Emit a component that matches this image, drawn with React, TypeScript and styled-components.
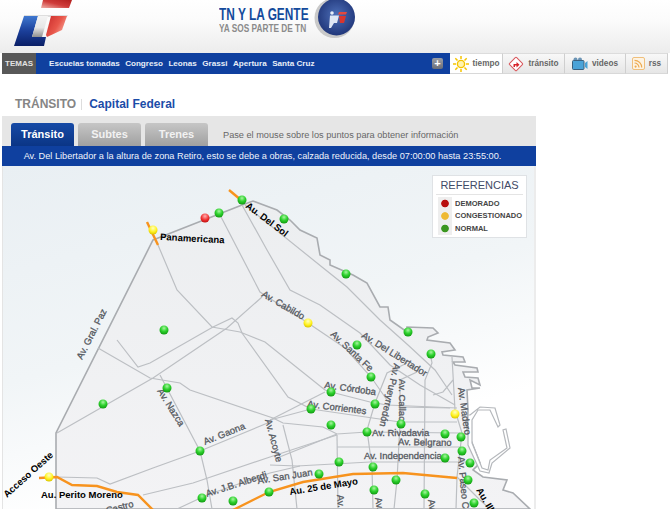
import styled, { createGlobalStyle } from "styled-components";

const GlobalStyle = createGlobalStyle`
  html, body {
    margin: 0;
    padding: 0;
    background: #fff;
    overflow: hidden;
    height: 509px;
    font-family: "Liberation Sans", Arial, sans-serif;
  }
`;

const Page = styled.div`
  width: 670px;
  height: 509px;
  overflow: hidden;
`;

const Header = styled.header`
  display: flex;
  height: 53px;
  background: linear-gradient(#fff 0%, #fbfbfb 40%, #ececec 100%);
`;

const LogoSvg = styled.svg`
  width: 90px;
  height: 53px;
  flex: none;
`;

const Promo = styled.div`
  display: flex;
  margin-left: 129px;
  height: 40px;
`;

const PromoText = styled.div`
  display: flex;
  flex-direction: column;
  padding-top: 6px;
  width: 95px;
`;

const PromoTitle = styled.span`
  font-size: 16.5px;
  line-height: 16px;
  font-weight: 700;
  color: #144a9c;
  white-space: nowrap;
  transform: scaleX(0.72);
  transform-origin: left center;
`;

const PromoSub = styled.span`
  font-size: 11.5px;
  line-height: 12px;
  font-weight: 700;
  color: #8b8b8b;
  white-space: nowrap;
  transform: scaleX(0.72);
  transform-origin: left center;
`;

const Ball = styled.svg`
  width: 46px;
  height: 40px;
`;

const Nav = styled.nav`
  display: flex;
  height: 21px;
  margin: 0 2px;
`;

const Temas = styled.div`
  width: 34px;
  background: #585858;
  color: #e2e2e2;
  font-size: 8px;
  font-weight: 700;
  line-height: 21px;
  text-align: center;
`;

const Topics = styled.div`
  display: flex;
  align-items: center;
  gap: 5.5px;
  width: 414px;
  box-sizing: border-box;
  padding: 0 7px 0 13px;
  background: #0f409f;
`;

const Topic = styled.a`
  color: #e8eef8;
  font-size: 8.1px;
  font-weight: 700;
  white-space: nowrap;
`;

const Plus = styled.span`
  width: 11px;
  height: 11px;
  margin-left: auto;
  border-radius: 2px;
  background: linear-gradient(#9a9ea6, #6a6e78);
  color: #fff;
  font-size: 11px;
  font-weight: 700;
  line-height: 11px;
  text-align: center;
`;

const SideTabs = styled.div`
  display: flex;
  flex: 1;
`;

const SideTab = styled.a<{ $active?: boolean; $w: number }>`
  display: flex;
  align-items: center;
  justify-content: center;
  gap: 4px;
  width: ${(p) => p.$w}px;
  box-sizing: border-box;
  background: ${(p) => (p.$active ? "#fff" : "linear-gradient(#f8f8f8, #e6e6e6)")};
  border-right: 1px solid #cfcfcf;
  border-top: 1px solid #dcdcdc;
  border-bottom: 1px solid #d8d8d8;
  color: #666;
  font-size: 8.2px;
  font-weight: 700;
`;

const Title = styled.h1`
  display: flex;
  align-items: center;
  height: 42px;
  box-sizing: border-box;
  margin: 0;
  padding: 18px 0 0 15px;
  font-size: 12px;
  font-weight: 700;
`;

const TitleGray = styled.span`
  color: #858585;
`;

const TitleSep = styled.span`
  width: 1px;
  height: 11px;
  margin: 0 7px 0 5px;
  background: #ddd;
`;

const TitleBlue = styled.span`
  color: #1b4ca8;
`;

const Panel = styled.section`
  width: 534px;
  margin-left: 2px;
  background: #e6e6e6;
`;

const TabRow = styled.div`
  display: flex;
  align-items: flex-end;
  gap: 4px;
  height: 30px;
  padding-left: 9px;
`;

const Tab = styled.a<{ $active?: boolean }>`
  width: 63px;
  height: 23px;
  border-radius: 3px 3px 0 0;
  background: ${(p) =>
    p.$active ? "linear-gradient(#164aa6, #0b3585)" : "linear-gradient(#c6c6c6, #a0a0a0)"};
  color: ${(p) => (p.$active ? "#fff" : "#f2f2f2")};
  font-size: 11px;
  font-weight: 700;
  line-height: 22px;
  text-align: center;
`;

const Hint = styled.span`
  margin-left: 11px;
  color: #666;
  font-size: 9.2px;
  line-height: 22px;
`;

const Band = styled.div`
  height: 20px;
  padding-right: 13px;
  background: #0f409f;
  color: #f0f4fb;
  font-size: 9.2px;
  line-height: 20px;
  text-align: center;
  white-space: nowrap;
`;

const MapArea = styled.div`
  position: relative;
  height: 343px;
  background: linear-gradient(165deg, #e9eff3 0%, #f1f5f7 45%, #fff 75%);
  border-left: 1px solid #e4e4e4;
  border-right: 2px solid #ececec;
`;

const MapSvg = styled.svg`
  display: block;
  width: 531px;
  height: 343px;
`;

const Legend = styled.aside`
  position: absolute;
  top: 9px;
  right: 7px;
  width: 95px;
  height: 63px;
  box-sizing: border-box;
  padding: 0 3px;
  background: #fff;
  border: 1px solid #dfe2e5;
`;

const LegendTitle = styled.div`
  height: 18px;
  border-bottom: 1px solid #e4e4e4;
  margin-bottom: 2px;
  color: #3f4a66;
  font-size: 11px;
  line-height: 19px;
  text-align: center;
`;

const LegendRow = styled.div`
  display: flex;
  align-items: center;
  gap: 3px;
  height: 12.6px;
  padding-left: 2px;
  color: #444;
  font-size: 7.5px;
  font-weight: 700;
  white-space: nowrap;
`;

const LegendDot = styled.span<{ $color: string }>`
  width: 14px;
  height: 12.6px;
  background: radial-gradient(circle, ${(p) => p.$color} 3.4px, #eee 4.2px);
`;

const RoadLine = styled.polyline`
  fill: none;
  stroke: #bcbfc3;
  stroke-width: 1.2;
`;

const Highway = styled.polyline`
  fill: none;
  stroke: #f7931e;
  stroke-width: 2.4;
`;

const Label = styled.text<{ $black?: boolean }>`
  font-family: "Liberation Sans", Arial, sans-serif;
  font-size: 9.5px;
  font-weight: ${(p) => (p.$black ? 700 : 400)};
  fill: ${(p) => (p.$black ? "#000" : "#55595f")};
  stroke: ${(p) => (p.$black ? "none" : "#55595f")};
  stroke-width: 0.3;
`;

const topics = ["Escuelas tomadas", "Congreso", "Leonas", "Grassi", "Apertura", "Santa Cruz"];

const roads = [
  "158,245 177,290 212,327 240,332 265,342 325,390",
  "219,213 260,292 308,323 345,348 371,377 387,400",
  "262,297 227,328 153,378 57,433",
  "117,340 138,367 150,363 213,327 232,318 238,323 242,333 288,397 311,409",
  "242,205 267,250 290,290 320,305 360,333 390,365 420,385 455,405",
  "245,205 322,267 347,287 380,320 408,345 435,370 452,395",
  "160,375 200,451 207,480 212,509",
  "57,477 97,478 110,484 153,468 200,451 270,422",
  "98,348 150,378 180,383 190,390 273,418 283,423 323,427 337,434 367,432 460,433",
  "283,425 292,460 297,509",
  "270,420 311,409 400,422 457,422",
  "270,420 325,392",
  "325,390 331,392 370,402 387,405 457,408",
  "337,434 277,458",
  "337,435 338,509",
  "337,447 460,447",
  "270,465 297,466 370,462 470,462",
  "143,495 193,483 270,457 337,435",
  "177,509 207,495 270,473 300,466",
  "407,363 387,373 375,403 367,430 372,467 373,509",
  "417,372 400,380 400,423 397,480 394,509",
  "430,353 432,363 425,380 424,509",
  "452,357 455,410 458,420 462,433 457,477 456,509",
  "433,395 443,392 453,380",
  "400,407 450,408",
  "457,477 480,500 490,509",
];

const coast =
  "153,240 242,205 253,201 277,210 290,220 300,230 317,238 320,255 330,260 330,265 353,275 367,283 380,307 388,307 390,320 407,332 407,327 433,328 438,333 428,337 427,340 450,343 455,350 442,352 443,355 463,357 465,362 453,362 455,365 477,368 478,372 463,372 465,377 478,378 480,385 470,380 472,388 480,388 467,390 468,410 467,430 480,463 473,470 483,477 507,480 503,490 513,493 530,509 56,509 56,433";

const basin =
  "470,415 480,407 495,408 500,425 498,427 490,410 478,410 472,420 472,443 482,468 488,470 490,460 507,448 503,430 506,429 510,448 492,463 489,473 480,471 468,445 468,415";

const greens = [
  [219, 213], [242, 200], [284, 219], [346, 274], [164, 330], [408, 332], [103, 404], [167, 388],
  [200, 451], [202, 498], [233, 501], [269, 492], [357, 345], [431, 354], [371, 377], [331, 392],
  [375, 404], [311, 409], [401, 424], [331, 425], [367, 432], [445, 434], [461, 437], [462, 451],
  [445, 458], [470, 463], [339, 462], [373, 467], [319, 474], [396, 480], [468, 480], [374, 490],
  [425, 494], [474, 503],
];

const yellows = [[153, 230], [308, 323], [49, 477], [455, 414]];

const labels: { t: string; x: number; y: number; r: number; black?: boolean }[] = [
  { t: "Panamericana", x: 160, y: 240, r: 3, black: true },
  { t: "Au. Del Sol", x: 245, y: 207, r: 37, black: true },
  { t: "Av. Gral. Paz", x: 82, y: 360, r: -63 },
  { t: "Av. Cabildo", x: 261, y: 296, r: 30 },
  { t: "Av. Santa Fe", x: 330, y: 335, r: 43 },
  { t: "Av. Del Libertador", x: 361, y: 337, r: 32 },
  { t: "Av. Córdoba", x: 324, y: 388, r: 8 },
  { t: "Av. Corrientes", x: 307, y: 407, r: 7 },
  { t: "Av. Pueyrredón", x: 394, y: 363, r: 103 },
  { t: "Av. Callao", x: 399, y: 379, r: 90 },
  { t: "Av. Madero", x: 458, y: 388, r: 82 },
  { t: "Av. Rivadavia", x: 372, y: 436, r: 0 },
  { t: "Av. Belgrano", x: 398, y: 445, r: 1 },
  { t: "Av. Independencia", x: 364, y: 459, r: 0 },
  { t: "Av. Paseo Colón", x: 458, y: 457, r: 85 },
  { t: "Au. Illia", x: 476, y: 490, r: 60, black: true },
  { t: "Av. Gaona", x: 205, y: 445, r: -22 },
  { t: "Av. Nazca", x: 157, y: 391, r: 58 },
  { t: "Av. Acoyte", x: 265, y: 420, r: 75 },
  { t: "Av. J.B. Alberdi", x: 207, y: 497, r: -18 },
  { t: "Av. San Juan", x: 258, y: 484, r: -9 },
  { t: "Au. 25 de Mayo", x: 290, y: 495, r: -9, black: true },
  { t: "Au. Perito Moreno", x: 41, y: 498, r: 0, black: true },
  { t: "Acceso Oeste", x: 7, y: 498, r: -42, black: true },
  { t: "Av. Castro", x: 92, y: 518, r: -15 },
  { t: "Av.", x: 337, y: 495, r: 85 },
  { t: "Av.", x: 375, y: 498, r: 80 },
  { t: "Av.", x: 428, y: 500, r: 80 },
];

function Sun() {
  return (
    <svg width="16" height="16" viewBox="0 0 16 16">
      <circle cx="8" cy="8" r="3.6" fill="#fff3b0" stroke="#f5c400" strokeWidth="1.4" />
      <path
        d="M8 0v3M8 13v3M0 8h3M13 8h3M2.3 2.3l2.2 2.2M11.5 11.5l2.2 2.2M2.3 13.7l2.2-2.2M11.5 4.5l2.2-2.2"
        stroke="#f5c400"
        strokeWidth="1.5"
      />
    </svg>
  );
}

function Turn() {
  return (
    <svg width="16" height="16" viewBox="0 0 16 16">
      <rect x="3" y="3" width="10" height="10" rx="1" transform="rotate(45 8 8)" fill="#fff" stroke="#d9555a" />
      <path d="M5.5 11V8h3V6l3 2.8-3 2.7V9.6H7V11z" fill="#d8232a" />
    </svg>
  );
}

function Camera() {
  return (
    <svg width="16" height="14" viewBox="0 0 16 14">
      <circle cx="3.5" cy="2.5" r="2" fill="#6b94b5" />
      <circle cx="8" cy="2.5" r="2" fill="#6b94b5" />
      <rect x="0.5" y="3.5" width="11.5" height="9" rx="1" fill="#4aa3d8" stroke="#39607f" />
      <path d="M13 6l2.5-2v8L13 10z" fill="#4aa3d8" />
    </svg>
  );
}

function Rss() {
  return (
    <svg width="13" height="13" viewBox="0 0 13 13">
      <rect x="0.5" y="0.5" width="12" height="12" rx="1.5" fill="#fdf3e3" stroke="#efbf7c" />
      <circle cx="3.6" cy="9.6" r="1.1" fill="#eda94f" />
      <path d="M2.5 6a4.5 4.5 0 0 1 4.5 4.5M2.5 3.3a7.2 7.2 0 0 1 7.2 7.2" fill="none" stroke="#eda94f" strokeWidth="1.2" />
    </svg>
  );
}

export default function App() {
  return (
    <Page>
      <GlobalStyle />
      <Header>
        <LogoSvg viewBox="0 0 90 53">
          <defs>
            <linearGradient id="lb" x1="0" y1="0" x2="0" y2="1">
              <stop offset="0" stopColor="#3f78d0" />
              <stop offset="0.5" stopColor="#1b3f9a" />
              <stop offset="1" stopColor="#0a1f66" />
            </linearGradient>
            <linearGradient id="lr" x1="0" y1="0" x2="1" y2="0.6">
              <stop offset="0" stopColor="#c92a2a" />
              <stop offset="0.6" stopColor="#e8564a" />
              <stop offset="1" stopColor="#f7a79a" />
            </linearGradient>
            <linearGradient id="lt" x1="0" y1="1" x2="1" y2="0">
              <stop offset="0" stopColor="#f0b0a8" />
              <stop offset="0.5" stopColor="#cf3c3a" />
              <stop offset="1" stopColor="#b3201f" />
            </linearGradient>
            <linearGradient id="lw" x1="0" y1="0" x2="0" y2="1">
              <stop offset="0" stopColor="#f4f4f4" />
              <stop offset="0.55" stopColor="#e6e6e6" />
              <stop offset="1" stopColor="#8f8f8f" />
            </linearGradient>
          </defs>
          <polygon points="43,0 72,0 69,8 41,8" fill="url(#lt)" />
          <polygon points="24,15 68,15 67,17 24,17" fill="#dedede" />
          <polygon points="24,16 38,16 32,37 46,37 44,46 14,46" fill="url(#lb)" />
          <polygon points="38,16 48,16 42,37 32,37" fill="url(#lw)" />
          <polygon points="51,16 67,16 62,30 47,37 46,35" fill="url(#lr)" />
        </LogoSvg>
        <Promo>
          <PromoText>
            <PromoTitle>TN Y LA GENTE</PromoTitle>
            <PromoSub>YA SOS PARTE DE TN</PromoSub>
          </PromoText>
          <Ball viewBox="0 0 46 40">
            <defs>
              <radialGradient id="ball" cx="0.5" cy="0.45" r="0.6">
                <stop offset="0" stopColor="#4d6fb8" />
                <stop offset="1" stopColor="#1d3275" />
              </radialGradient>
            </defs>
            <circle cx="20.5" cy="18" r="20" fill="#c9c9c9" />
            <circle cx="22.5" cy="17" r="18.5" fill="url(#ball)" />
            <circle cx="18" cy="13" r="1.8" fill="#e8eef8" />
            <polygon points="16,15.5 25,15.5 23,23 20,23 17,28 15,28" fill="#dfe7f5" />
            <polygon points="25,12 33,12 32,14.5 24,14.5" fill="#e2493f" />
            <polygon points="25,16 32,16 30,23 26,23" fill="#d8362f" />
          </Ball>
        </Promo>
      </Header>
      <Nav>
        <Temas>TEMAS</Temas>
        <Topics>
          {topics.map((t) => (
            <Topic key={t}>{t}</Topic>
          ))}
          <Plus>+</Plus>
        </Topics>
        <SideTabs>
          <SideTab $active $w={53}>
            <Sun />
            tiempo
          </SideTab>
          <SideTab $w={62}>
            <Turn />
            tránsito
          </SideTab>
          <SideTab $w={61}>
            <Camera />
            videos
          </SideTab>
          <SideTab $w={42}>
            <Rss />
            rss
          </SideTab>
        </SideTabs>
      </Nav>
      <Title>
        <TitleGray>TRÁNSITO</TitleGray>
        <TitleSep />
        <TitleBlue>Capital Federal</TitleBlue>
      </Title>
      <Panel>
        <TabRow>
          <Tab $active>Tránsito</Tab>
          <Tab>Subtes</Tab>
          <Tab>Trenes</Tab>
          <Hint>Pase el mouse sobre los puntos para obtener información</Hint>
        </TabRow>
        <Band>Av. Del Libertador a la altura de zona Retiro, esto se debe a obras, calzada reducida, desde 07:00:00 hasta 23:55:00.</Band>
        <MapArea>
          <MapSvg viewBox="3 166 531 343">
            <defs>
              <radialGradient id="dotG" cx="0.5" cy="0.3" r="0.7">
                <stop offset="0" stopColor="#a8f5a0" />
                <stop offset="0.5" stopColor="#2fd32f" />
                <stop offset="1" stopColor="#109a10" />
              </radialGradient>
              <radialGradient id="dotY" cx="0.5" cy="0.3" r="0.7">
                <stop offset="0" stopColor="#ffffc0" />
                <stop offset="0.6" stopColor="#fff21f" />
                <stop offset="1" stopColor="#d9c400" />
              </radialGradient>
              <radialGradient id="dotR" cx="0.5" cy="0.3" r="0.7">
                <stop offset="0" stopColor="#ffb0b0" />
                <stop offset="0.6" stopColor="#f03030" />
                <stop offset="1" stopColor="#c01010" />
              </radialGradient>
              <linearGradient id="land" x1="0" y1="0" x2="0" y2="1">
                <stop offset="0" stopColor="#eceef0" />
                <stop offset="1" stopColor="#f3f3f5" />
              </linearGradient>
            </defs>
            <polygon points={coast} fill="url(#land)" stroke="#a9acb0" strokeWidth="1.6" />
            <polygon points={basin} fill="#fff" stroke="#b5b8bc" strokeWidth="1.2" />
            {roads.map((r) => (
              <RoadLine key={r} points={r} />
            ))}
            <Highway points="147,222 158,245" />
            <Highway points="229,190 241,200" />
            <Highway points="39,478 57,477 72,485 97,486 117,492 138,495 153,510" />
            <Highway points="233,510 269,492 303,482 353,474 403,473 457,478" />
            {labels.map((l) => (
              <Label key={l.t + l.x} $black={l.black} x={l.x} y={l.y} transform={`rotate(${l.r} ${l.x} ${l.y})`}>
                {l.t}
              </Label>
            ))}
            {greens.map(([x, y]) => (
              <circle key={`${x}-${y}`} cx={x} cy={y} r="4.5" fill="url(#dotG)" />
            ))}
            {yellows.map(([x, y]) => (
              <circle key={`${x}-${y}`} cx={x} cy={y} r="4.5" fill="url(#dotY)" />
            ))}
            <circle cx="205" cy="218" r="4.5" fill="url(#dotR)" />
          </MapSvg>
          <Legend>
            <LegendTitle>REFERENCIAS</LegendTitle>
            <LegendRow>
              <LegendDot $color="#b80f0f" />
              DEMORADO
            </LegendRow>
            <LegendRow>
              <LegendDot $color="#eeb933" />
              CONGESTIONADO
            </LegendRow>
            <LegendRow>
              <LegendDot $color="#3a961f" />
              NORMAL
            </LegendRow>
          </Legend>
        </MapArea>
      </Panel>
    </Page>
  );
}
